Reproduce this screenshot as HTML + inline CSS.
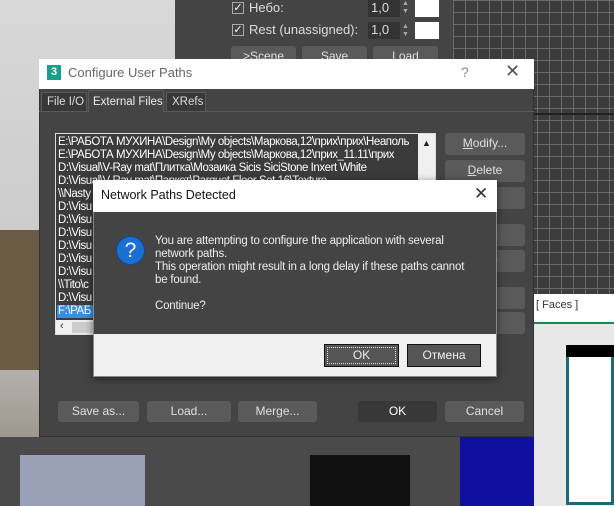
<!DOCTYPE html>
<html><head><meta charset="utf-8"><style>
*{box-sizing:border-box;margin:0;padding:0}
body{width:614px;height:506px;overflow:hidden;position:relative;background:#cfcfcf;font-family:"Liberation Sans","DejaVu Sans",sans-serif;font-size:12px}
.a{position:absolute}
.btn{position:absolute;background:#5a5a5a;color:#e0e0e0;border-radius:3px;text-align:center;font-size:12px;line-height:21px}
.row{position:absolute;left:2px;height:13px;line-height:13px;color:#fff;font-size:11.5px;white-space:nowrap;letter-spacing:-0.45px}
.tab{position:absolute;white-space:nowrap;font-size:11.5px;color:#ddd;border:1px solid #5a5a5a;border-bottom:none;border-radius:2px 2px 0 0}
</style></head><body>
<div class="a" style="left:0;top:0;width:175px;height:506px;background:linear-gradient(#d8d8d8,#c8c8c8 60%,#8a7f72)"></div>
<div class="a" style="left:0;top:230px;width:40px;height:140px;background:#6b5a44"></div>
<div class="a" style="left:175px;top:0;width:278px;height:70px;background:#444"></div>
<div class="a" style="left:232px;top:2px;width:12px;height:12px;border:1px solid #aaa;color:#fff;font-size:11px;line-height:10px;text-align:center">✓</div>
<div class="a" style="left:249px;top:0;color:#ddd;font-size:13px">Небо:</div>
<div class="a" style="left:232px;top:24px;width:12px;height:12px;border:1px solid #aaa;color:#fff;font-size:11px;line-height:10px;text-align:center">✓</div>
<div class="a" style="left:249px;top:22px;color:#ddd;font-size:13px">Rest (unassigned):</div>
<div class="a" style="left:368px;top:0;width:32px;height:17px;background:#333;color:#ddd;font-size:13px;padding-left:3px">1,0</div>
<div class="a" style="left:402px;top:0;color:#aaa;font-size:7px;line-height:8px">▲<br>▼</div>
<div class="a" style="left:415px;top:0;width:24px;height:17px;background:#fff"></div>
<div class="a" style="left:368px;top:22px;width:32px;height:17px;background:#333;color:#ddd;font-size:13px;padding-left:3px">1,0</div>
<div class="a" style="left:402px;top:23px;color:#aaa;font-size:7px;line-height:8px">▲<br>▼</div>
<div class="a" style="left:415px;top:22px;width:24px;height:17px;background:#fff"></div>
<div class="btn" style="left:231px;top:46px;width:65px;height:20px;line-height:20px">&gt;Scene</div>
<div class="btn" style="left:302px;top:46px;width:65px;height:20px;line-height:20px">Save</div>
<div class="btn" style="left:373px;top:46px;width:65px;height:20px;line-height:20px">Load</div>
<div class="a" style="left:453px;top:0;width:161px;height:295px;background-color:#3c3c3c;background-image:linear-gradient(90deg,#6a6a6a 1px,transparent 1px),linear-gradient(#6a6a6a 1px,transparent 1px);background-size:12px 12px"></div>
<div class="a" style="left:534px;top:113px;width:80px;height:2px;background:#222"></div>
<div class="a" style="left:534px;top:294px;width:80px;height:30px;background:#fff;border-bottom:2px solid #1a8a4a;color:#333;font-size:11px;padding:5px 0 0 2px">[ Faces ]</div>
<div class="a" style="left:534px;top:324px;width:80px;height:182px;background:#e8e8e8"></div>
<div class="a" style="left:566px;top:345px;width:48px;height:160px;border:3px solid #1a6a7a;background:#fff"></div>
<div class="a" style="left:566px;top:345px;width:48px;height:12px;background:#000"></div>
<div class="a" style="left:460px;top:437px;width:74px;height:69px;background:#1010a0"></div>
<div class="a" style="left:0;top:437px;width:460px;height:69px;background:#4a4a4a"></div>
<div class="a" style="left:20px;top:455px;width:125px;height:51px;background:#9aa0b8"></div>
<div class="a" style="left:310px;top:455px;width:100px;height:51px;background:#111"></div>
<div class="a" style="left:39px;top:59px;width:495px;height:378px;background:#444;border:1px solid #333"></div>
<div class="a" style="left:39px;top:59px;width:495px;height:30px;background:#fff"></div>
<div class="a" style="left:47px;top:65px;width:14px;height:15px;background:#1aa08a;color:#fff;font-weight:bold;font-size:11px;text-align:center;line-height:15px">3</div>
<div class="a" style="left:68px;top:65px;color:#666;font-size:13px">Configure User Paths</div>
<div class="a" style="left:461px;top:64px;color:#888;font-size:14px">?</div>
<div class="a" style="left:505px;top:61px;color:#555;font-size:18px">✕</div>
<div class="a" style="left:39px;top:111px;width:495px;height:1px;background:#5a5a5a"></div>
<div class="tab" style="left:41px;top:92px;width:46px;height:19px;background:#383838;padding:3px 0 0 5px">File I/O</div>
<div class="tab" style="left:88px;top:90px;width:76px;height:22px;background:#444;padding:5px 0 0 4px;color:#eee">External Files</div>
<div class="tab" style="left:166px;top:92px;width:40px;height:19px;background:#383838;padding:3px 0 0 5px">XRefs</div>
<div class="a" style="left:55px;top:133px;width:381px;height:202px;background:#3b3b3b;border:1px solid #ddd;overflow:hidden">
<div class="row" style="top:2px">E:\РАБОТА МУХИНА\Design\My objects\Маркова,12\прих\прих\Неаполь</div>
<div class="row" style="top:15px">E:\РАБОТА МУХИНА\Design\My objects\Маркова,12\прих_11.11\прих</div>
<div class="row" style="top:28px">D:\Visual\V-Ray mat\Плитка\Мозаика Sicis SiciStone Inxert White</div>
<div class="row" style="top:41px">D:\Visual\V-Ray mat\Паркет\Parquet Floor Set 16\Texture</div>
<div class="row" style="top:54px">\\Nasty</div>
<div class="row" style="top:67px">D:\Visu</div>
<div class="row" style="top:80px">D:\Visu</div>
<div class="row" style="top:93px">D:\Visu</div>
<div class="row" style="top:106px">D:\Visu</div>
<div class="row" style="top:119px">D:\Visu</div>
<div class="row" style="top:132px">D:\Visu</div>
<div class="row" style="top:145px">\\Tito\c</div>
<div class="row" style="top:158px">D:\Visu</div>
<div class="row" style="top:171px;left:1px;background:#3a8ee0;width:60px;padding-left:1px">F:\РАБ</div>
<div class="a" style="left:0;top:186px;width:379px;height:15px;background:#f0f0f0"></div>
<div class="a" style="left:4px;top:186px;color:#222;font-size:11px">‹</div>
<div class="a" style="left:16px;top:188px;width:60px;height:11px;background:#ccc"></div>
<div class="a" style="left:362px;top:0;width:17px;height:186px;background:#f0f0f0"></div>
<div class="a" style="left:366px;top:4px;color:#222;font-size:9px">▲</div>
</div>
<div class="btn" style="left:445px;top:133px;width:80px;height:22px"><u>M</u>odify...</div>
<div class="btn" style="left:445px;top:160px;width:80px;height:22px"><u>D</u>elete</div>
<div class="btn" style="left:445px;top:187px;width:80px;height:22px"></div>
<div class="btn" style="left:445px;top:224px;width:80px;height:22px">ative</div>
<div class="btn" style="left:445px;top:250px;width:80px;height:22px;color:#999">olute</div>
<div class="btn" style="left:445px;top:287px;width:80px;height:22px">p</div>
<div class="btn" style="left:445px;top:312px;width:80px;height:22px;color:#999">wn</div>
<div class="btn" style="left:58px;top:401px;width:81px;height:21px">Save as...</div>
<div class="btn" style="left:147px;top:401px;width:84px;height:21px">Load...</div>
<div class="btn" style="left:238px;top:401px;width:79px;height:21px">Merge...</div>
<div class="btn" style="left:358px;top:401px;width:79px;height:21px;background:#383838;color:#fff">OK</div>
<div class="btn" style="left:445px;top:401px;width:79px;height:21px">Cancel</div>
<div class="a" style="left:93px;top:180px;width:404px;height:197px;background:#444;border:1px solid #888;box-shadow:0 2px 8px rgba(0,0,0,.5)"></div>
<div class="a" style="left:93px;top:180px;width:404px;height:32px;background:#fff"></div>
<div class="a" style="left:101px;top:188px;color:#111;font-size:12.5px">Network Paths Detected</div>
<div class="a" style="left:474px;top:184px;color:#333;font-size:17px">✕</div>
<div class="a" style="left:93px;top:334px;width:404px;height:43px;background:#f0f0f0;border:1px solid #888;border-top:none"></div>
<div class="a" style="left:116px;top:236px;width:29px;height:29px;border-radius:50%;background:#1a6fd0;border:1px solid #0a4aa0;color:#fff;font-size:21px;text-align:center;line-height:28px">?</div>
<div class="a" style="left:155px;top:235px;color:#eee;font-size:11.5px;line-height:13px;letter-spacing:-0.2px">You are attempting to configure the application with several<br>network paths.<br>This operation might result in a long delay if these paths cannot<br>be found.<br><br>Continue?</div>
<div class="a" style="left:324px;top:344px;width:75px;height:23px;background:#555;border:1px solid #111;outline:1px dotted #ddd;outline-offset:-4px;color:#eee;text-align:center;line-height:21px">OK</div>
<div class="a" style="left:407px;top:344px;width:74px;height:23px;background:#555;border:1px solid #111;color:#eee;text-align:center;line-height:21px">Отмена</div>
</body></html>
